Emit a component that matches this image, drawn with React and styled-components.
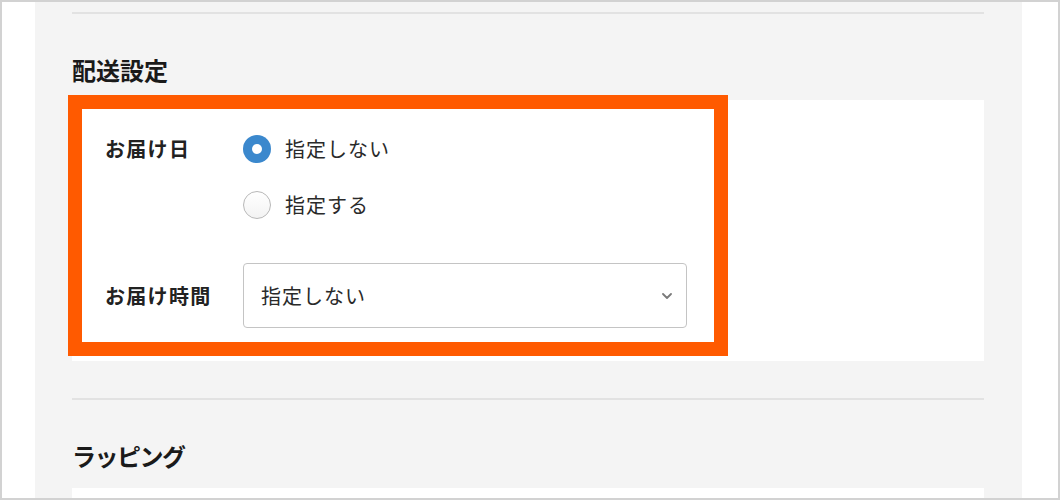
import React from "react";
import styled, { createGlobalStyle } from "styled-components";

const Global = createGlobalStyle`
  html, body { margin: 0; padding: 0; background: #ffffff; }
  body { font-family: "Noto Sans CJK JP", "Noto Sans", sans-serif; color: #222; }
  * { box-sizing: border-box; }
`;

const Frame = styled.div`
  width: 1060px;
  height: 500px;
  border: 2px solid #d2d2d2;
  background: #ffffff;
  padding: 0 36px 0 33px;
  overflow: hidden;
`;

const Panel = styled.div`
  height: 100%;
  background: #f4f4f4;
  padding: 10px 38px 0 37px;
`;

const Divider = styled.hr`
  margin: 0;
  border: none;
  height: 2px;
  background: #e2e2e2;
`;

const Section = styled.section`
  display: flex;
  flex-direction: column;
`;

const Heading = styled.h2`
  margin: 39px 0 ${(p) => (p.$gap ? p.$gap : "13px")};
  font-size: 24px;
  line-height: 34px;
  font-weight: 700;
  letter-spacing: ${(p) => p.$tracking || "0"};
  color: #1a1a1a;
`;

const Card = styled.div`
  position: relative;
  background: #ffffff;
  padding: 35px 33px 33px;
  display: flex;
  flex-direction: column;
  gap: 44px;
  margin-bottom: ${(p) => (p.$last ? "0" : "37px")};
  min-height: ${(p) => (p.$last ? "40px" : "auto")};
`;

const Highlight = styled.div`
  position: absolute;
  left: -4px;
  top: -5px;
  width: 660px;
  height: 261px;
  border: 14px solid #ff5a00;
  pointer-events: none;
`;

const Row = styled.div`
  display: grid;
  grid-template-columns: 138px 1fr;
  align-items: ${(p) => p.$align || "center"};
`;

const Label = styled.div`
  font-size: 20px;
  font-weight: 700;
  letter-spacing: 1.3px;
  line-height: 28px;
  color: #222;
`;

const RadioGroup = styled.div`
  display: flex;
  flex-direction: column;
  gap: 28px;
`;

const RadioOption = styled.label`
  display: flex;
  align-items: center;
  gap: 14px;
  font-size: 20px;
  line-height: 28px;
  letter-spacing: 1px;
  color: #2a2a2a;
`;

const RadioCircle = styled.span`
  width: 28px;
  height: 28px;
  border-radius: 50%;
  flex-shrink: 0;
  display: flex;
  align-items: center;
  justify-content: center;
  background: ${(p) => (p.$checked ? "#3b88cd" : "linear-gradient(#ffffff, #f3f3f3)")};
  border: ${(p) => (p.$checked ? "none" : "1px solid #b8b8b8")};
  &::after {
    content: "";
    display: ${(p) => (p.$checked ? "block" : "none")};
    width: 10px;
    height: 10px;
    border-radius: 50%;
    background: #ffffff;
  }
`;

const Select = styled.div`
  width: 444px;
  height: 65px;
  border: 1px solid #c4c4c4;
  border-radius: 4px;
  background: #ffffff;
  display: flex;
  align-items: center;
  justify-content: space-between;
  padding: 0 14px 0 17px;
  font-size: 20px;
  letter-spacing: 1px;
  color: #2a2a2a;
`;

const Chevron = () => (
  <svg width="10" height="6" viewBox="0 0 10 6" fill="none">
    <path d="M1 1l4 4 4-4" stroke="#7a7a7a" strokeWidth="1.8" strokeLinecap="round" strokeLinejoin="round" />
  </svg>
);

export default function App() {
  return (
    <>
      <Global />
      <Frame>
        <Panel>
          <Divider />
          <Section>
            <Heading>配送設定</Heading>
            <Card>
              <Row $align="start">
                <Label>お届け日</Label>
                <RadioGroup>
                  <RadioOption>
                    <RadioCircle $checked />
                    指定しない
                  </RadioOption>
                  <RadioOption>
                    <RadioCircle />
                    指定する
                  </RadioOption>
                </RadioGroup>
              </Row>
              <Row>
                <Label>お届け時間</Label>
                <Select>
                  <span>指定しない</span>
                  <Chevron />
                </Select>
              </Row>
              <Highlight />
            </Card>
          </Section>
          <Divider />
          <Section>
            <Heading $gap="15px" $tracking="-1.5px">ラッピング</Heading>
            <Card $last />
          </Section>
        </Panel>
      </Frame>
    </>
  );
}
